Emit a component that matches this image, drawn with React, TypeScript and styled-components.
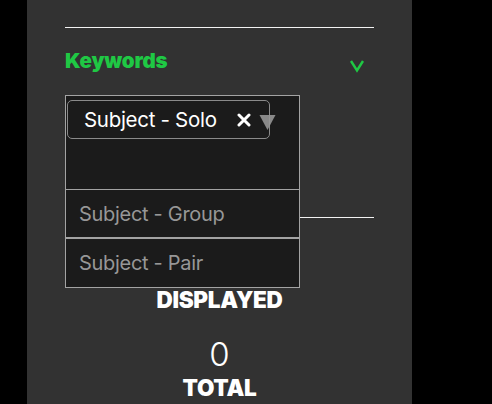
import React from "react";
import styled, { createGlobalStyle } from "styled-components";

const Global = createGlobalStyle`
  html, body { margin: 0; padding: 0; background: #000; }
  body { font-family: Inter, "Liberation Sans", sans-serif; }
`;

const Page = styled.div`
  display: flex;
  min-height: 404px;
  background: #000;
`;

const Panel = styled.div`
  margin-left: 27px;
  width: 385px;
  min-height: 404px;
  background: #323232;
  padding: 27px 38px 0;
  box-sizing: border-box;
`;

const Rule = styled.div<{ $mt?: number }>`
  height: 1px;
  background: #f2f2f2;
  margin-top: ${(p) => p.$mt ?? 0}px;
`;

const Header = styled.div`
  display: flex;
  align-items: center;
  justify-content: space-between;
  height: 67px;
`;

const Title = styled.div`
  color: #1fc844;
  font-weight: 900;
  font-size: 20.5px;
  letter-spacing: -0.2px;
  margin-top: -2px;
`;

const Chevron = styled.svg`
  width: 16px;
  height: 14px;
  margin-right: 9px;
  margin-top: 8px;
`;

const SelectWrap = styled.div`
  position: relative;
  width: 235px;
`;

const Control = styled.div`
  box-sizing: border-box;
  height: 95px;
  background: #1b1b1b;
  border: 1px solid #a3a3a3;
  padding: 4px 0 0 1px;
  position: relative;
`;

const Chip = styled.div`
  box-sizing: border-box;
  width: 203px;
  height: 39px;
  border: 1px solid #8a8a8a;
  border-radius: 5px;
  display: flex;
  align-items: center;
  padding-left: 16px;
  color: #fff;
  font-size: 20.5px;
  letter-spacing: -0.3px;
`;

const ChipText = styled.span`
  flex: 1;
`;

const Remove = styled.svg`
  width: 14px;
  height: 14px;
  margin-right: 18px;
  margin-top: 1px;
`;

const Caret = styled.svg`
  position: absolute;
  left: 193px;
  top: 18px;
  width: 17px;
  height: 17px;
`;

const Menu = styled.div`
  position: absolute;
  top: 100%;
  left: 0;
  right: 0;
  z-index: 2;
  background: #1b1b1b;
  border: 1px solid #a3a3a3;
  border-top: none;
`;

const Option = styled.div<{ $last?: boolean }>`
  box-sizing: border-box;
  height: ${(p) => (p.$last ? 48 : 49)}px;
  display: flex;
  align-items: center;
  padding-left: 13px;
  color: #979797;
  font-size: 20px;
  letter-spacing: -0.3px;
  border-bottom: ${(p) => (p.$last ? "none" : "2px solid #a3a3a3")};
`;

const Stats = styled.div`
  display: flex;
  flex-direction: column;
  align-items: center;
  color: #fff;
`;

const Number = styled.div<{ $mt: number }>`
  font-size: 33px;
  font-weight: 300;
  line-height: 40px;
  margin-top: ${(p) => p.$mt}px;
`;

const Label = styled.div`
  font-size: 22.5px;
  font-weight: 900;
  line-height: 28px;
  letter-spacing: -0.3px;
`;

export default function App() {
  return (
    <>
      <Global />
      <Page>
        <Panel>
          <Rule />
          <Header>
            <Title>Keywords</Title>
            <Chevron viewBox="0 0 16 14">
              <path d="M2 2 L8 11.5 L14 2" fill="none" stroke="#1fc844" strokeWidth="2.4" />
            </Chevron>
          </Header>
          <SelectWrap>
            <Control>
              <Chip>
                <ChipText>Subject - Solo</ChipText>
                <Remove viewBox="0 0 14 14">
                  <path d="M2 2 L12 12 M12 2 L2 12" stroke="#fff" strokeWidth="3" strokeLinecap="round" />
                </Remove>
              </Chip>
              <Caret viewBox="0 0 17 17">
                <path d="M0.5 1 L16.5 1 L8.5 16 Z" fill="rgba(150,150,150,0.9)" />
              </Caret>
            </Control>
            <Menu>
              <Option>Subject - Group</Option>
              <Option $last>Subject - Pair</Option>
            </Menu>
          </SelectWrap>
          <Rule $mt={27} />
          <Stats>
            <Number $mt={28}>0</Number>
            <Label>DISPLAYED</Label>
            <Number $mt={20}>0</Number>
            <Label>TOTAL</Label>
          </Stats>
        </Panel>
      </Page>
    </>
  );
}
